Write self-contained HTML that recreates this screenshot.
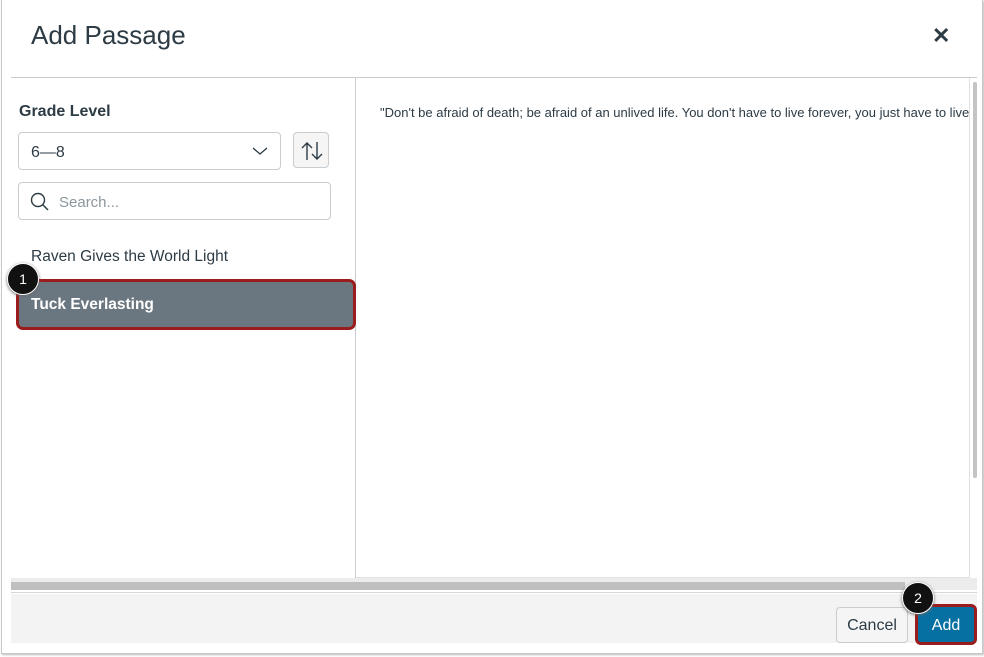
<!DOCTYPE html><html><head><style>
body{margin:0;width:984px;height:657px;background:#fff;font-family:"Liberation Sans",sans-serif;position:relative;overflow:hidden;color:#2d3b45}
.a{position:absolute}
</style></head><body>
<div class="a" style="left:1px;top:0;width:980px;height:653px;border:1px solid #c8c8c8;border-top:none;box-shadow:1px 1px 2px #bbb"></div>
<div class="a" style="left:31px;top:20px;font-size:26px;color:#2d3b45">Add Passage</div>
<div class="a" style="left:932px;top:23px;font-size:22px;font-weight:bold">✕</div>
<div class="a" style="left:11px;top:77px;width:966px;height:1px;background:#c7cdd1"></div>
<div class="a" style="left:355px;top:78px;width:1px;height:500px;background:#c7cdd1"></div>
<div class="a" style="left:969px;top:78px;width:1px;height:500px;background:#e0e0e0"></div>
<div class="a" style="left:973px;top:82px;width:4px;height:396px;background:#c4c4c4;border-radius:2px"></div>
<div class="a" style="left:356px;top:577px;width:614px;height:1px;background:#e0e0e0"></div>
<div class="a" style="left:19px;top:103px;font-size:16px;font-weight:bold">Grade Level</div>
<div class="a" style="left:18px;top:132px;width:261px;height:36px;border:1px solid #c7cdd1;border-radius:4px"></div>
<div class="a" style="left:31px;top:144px;font-size:16px">6—8</div>
<svg class="a" style="left:252px;top:146px" width="16" height="10"><path d="M1 2l7 6 7-6" fill="none" stroke="#2d3b45" stroke-width="1.3"/></svg>
<div class="a" style="left:293px;top:132px;width:36px;height:36px;background:#f5f5f5;border:1px solid #c7cdd1;border-radius:4px;box-sizing:border-box"></div>
<svg class="a" style="left:301px;top:140px" width="22" height="22"><path d="M6 20V3M1 8l5-5 5 5M16 2v17M11 14l5 5 5-5" fill="none" stroke="#2d3b45" stroke-width="1.4"/></svg>
<div class="a" style="left:18px;top:182px;width:311px;height:36px;border:1px solid #c7cdd1;border-radius:4px"></div>
<svg class="a" style="left:30px;top:192px" width="20" height="20"><circle cx="8" cy="8" r="6.5" fill="none" stroke="#2d3b45" stroke-width="1.4"/><path d="M13 13l5 5" stroke="#2d3b45" stroke-width="1.5"/></svg>
<div class="a" style="left:59px;top:194px;font-size:15px;color:#8b969e">Search...</div>
<div class="a" style="left:31px;top:248px;font-size:15.5px">Raven Gives the World Light</div>
<div class="a" style="left:16px;top:279px;width:340px;height:51px;background:#6b7780;border:3px solid #9b1c1c;border-radius:7px;box-sizing:border-box"></div>
<div class="a" style="left:31px;top:296px;font-size:15.5px;font-weight:bold;color:#fff">Tuck Everlasting</div>
<div class="a" style="left:7px;top:263px;width:30px;height:30px;border-radius:50%;background:#111;border:1.5px solid #fff;box-shadow:0 1px 3px #666;color:#fff;font-size:14px;text-align:center;line-height:30px">1</div>
<div class="a" style="left:380px;top:105px;font-size:13px;white-space:nowrap;width:589px;overflow:hidden">"Don't be afraid of death; be afraid of an unlived life. You don't have to live forever, you just have to live."</div>
<div class="a" style="left:11px;top:578px;width:966px;height:12px;background:#ececec"></div>
<div class="a" style="left:11px;top:582px;width:894px;height:8px;background:#bfbfbf"></div>
<div class="a" style="left:11px;top:592px;width:966px;height:1px;background:#d6d6d6"></div>
<div class="a" style="left:11px;top:594px;width:966px;height:49px;background:#f3f3f3"></div>
<div class="a" style="left:836px;top:607px;width:72px;height:36px;background:#f5f5f5;border:1px solid #c7cdd1;border-radius:4px;box-sizing:border-box;font-size:16px;text-align:center;line-height:36px">Cancel</div>
<div class="a" style="left:915px;top:604px;width:62px;height:41px;background:#0770a3;border:3px solid #9b1c1c;border-radius:6px;box-sizing:border-box;font-size:16px;color:#fff;text-align:center;line-height:37px">Add</div>
<div class="a" style="left:902px;top:582px;width:30px;height:30px;border-radius:50%;background:#111;border:1.5px solid #fff;box-shadow:0 1px 3px #666;color:#fff;font-size:14px;text-align:center;line-height:30px">2</div>
</body></html>
